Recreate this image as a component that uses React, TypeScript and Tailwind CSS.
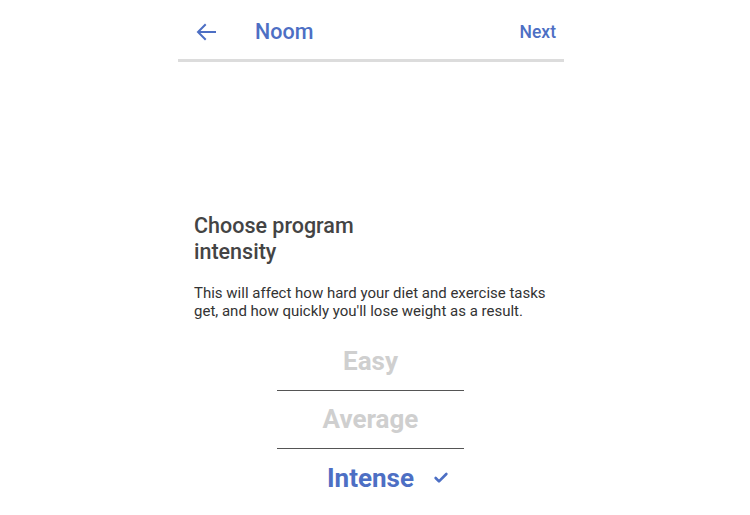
import { Check } from "lucide-react"

const options = [
  { label: "Easy", selected: false },
  { label: "Average", selected: false },
  { label: "Intense", selected: true },
]

export default function App() {
  return (
    <div className="min-h-screen bg-white font-['Roboto',sans-serif]">
      <div className="ml-[178px] w-[386px]">
        {/* Header */}
        <header className="flex h-[62px] items-center border-b-[3px] border-[#dcdcdc] pt-[5px]">
          <button className="ml-[16px] flex h-6 w-6 items-center justify-center text-[#4d6fc4]">
            <svg width="24" height="24" viewBox="0 0 24 24" fill="none" stroke="currentColor" strokeWidth="2" strokeLinecap="square">
              <path d="M21 12H4.5M11 5l-7 7 7 7" />
            </svg>
          </button>
          <h1 className="ml-[37px] text-[21.5px] font-medium text-[#4d6fc4]">Noom</h1>
          <button className="ml-auto mr-[8px] text-[17.5px] font-medium text-[#4d6fc4]">Next</button>
        </header>

        {/* Content */}
        <main className="px-[16px] pt-[151px]">
          <h2 className="w-[200px] text-[21.5px] leading-[26px] font-medium text-[#444]">
            Choose program intensity
          </h2>
          <p className="mt-[19px] text-[15px] leading-[18px] text-[#333]">
            This will affect how hard your diet and exercise tasks get, and how quickly you'll lose weight as a result.
          </p>

          <div className="ml-[83px] mt-[13px] w-[187px]">
            {options.map((o, i) => (
              <div
                key={o.label}
                className={
                  "relative flex h-[58px] items-center justify-center " +
                  (i < options.length - 1 ? "border-b border-[#555]" : "")
                }
              >
                <span
                  className={
                    "text-[26px] font-bold " + (o.selected ? "text-[#4d6fc4]" : "text-[#cfcfcf]")
                  }
                >
                  {o.label}
                </span>
                {o.selected && (
                  <Check className="absolute right-[15px] h-[16px] w-[16px] text-[#4d6fc4]" strokeWidth={4} />
                )}
              </div>
            ))}
          </div>
        </main>
      </div>
    </div>
  )
}
